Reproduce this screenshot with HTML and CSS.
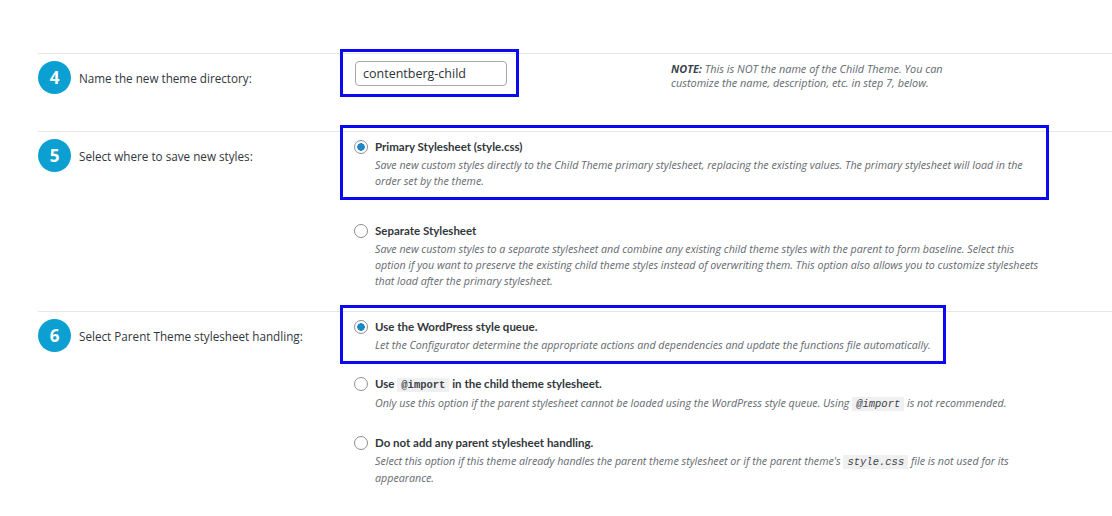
FILE: index.html
```html
<!DOCTYPE html>
<html lang="en">
<head>
    <meta charset="UTF-8">
    <title>Child Theme Configurator</title>
    <link rel="stylesheet" href="styles.css">
</head>
<body>

<div class="steps">

    <div class="step step--name">
        <div class="step-title">
            <span class="step-num">4</span>
            <span class="step-label">Name the new theme directory:</span>
        </div>
        <div class="step-body">
            <div class="field-row">
                <div class="field highlight">
                    <input class="text-input" type="text" value="contentberg-child">
                </div>
                <p class="note"><strong>NOTE:</strong> This is NOT the name of the Child Theme. You can customize the name, description, etc. in step 7, below.</p>
            </div>
        </div>
    </div>

    <div class="step">
        <div class="step-title">
            <span class="step-num">5</span>
            <span class="step-label">Select where to save new styles:</span>
        </div>
        <div class="step-body options options--loose">
            <label class="option highlight option--wide">
                <input class="radio" type="radio" name="save" checked>
                <span class="option-text">
                    <span class="option-label">Primary Stylesheet (style.css)</span>
                    <span class="option-desc">Save new custom styles directly to the Child Theme primary stylesheet, replacing the existing values. The primary stylesheet will load in the order set by the theme.</span>
                </span>
            </label>
            <label class="option">
                <input class="radio" type="radio" name="save">
                <span class="option-text">
                    <span class="option-label">Separate Stylesheet</span>
                    <span class="option-desc">Save new custom styles to a separate stylesheet and combine any existing child theme styles with the parent to form baseline. Select this option if you want to preserve the existing child theme styles instead of overwriting them. This option also allows you to customize stylesheets that load after the primary stylesheet.</span>
                </span>
            </label>
        </div>
    </div>

    <div class="step">
        <div class="step-title">
            <span class="step-num">6</span>
            <span class="step-label">Select Parent Theme stylesheet handling:</span>
        </div>
        <div class="step-body options">
            <label class="option highlight">
                <input class="radio" type="radio" name="parent" checked>
                <span class="option-text">
                    <span class="option-label">Use the WordPress style queue.</span>
                    <span class="option-desc">Let the Configurator determine the appropriate actions and dependencies and update the functions file automatically.</span>
                </span>
            </label>
            <label class="option">
                <input class="radio" type="radio" name="parent">
                <span class="option-text">
                    <span class="option-label">Use <code>@import</code> in the child theme stylesheet.</span>
                    <span class="option-desc">Only use this option if the parent stylesheet cannot be loaded using the WordPress style queue. Using <code>@import</code> is not recommended.</span>
                </span>
            </label>
            <label class="option">
                <input class="radio" type="radio" name="parent">
                <span class="option-text">
                    <span class="option-label">Do not add any parent stylesheet handling.</span>
                    <span class="option-desc">Select this option if this theme already handles the parent theme stylesheet or if the parent theme's <code>style.css</code> file is not used for its appearance.</span>
                </span>
            </label>
        </div>
    </div>

</div>

</body>
</html>
```

FILE: styles.css
```css
body {
    margin: 0;
    background-color: #fff;
    font-family: "Open Sans", "Noto Sans", sans-serif;
    color: #3c434a;
}
.steps {
    padding: 53px 0 0 38px;
}
.step {
    display: flex;
    border-top: 1px solid #e6e6e6;
    padding-bottom: 14px;
}
.step--name {
    padding-bottom: 37px;
}
.step-title {
    width: 302px;
    flex-shrink: 0;
    display: flex;
    align-items: center;
    align-self: flex-start;
    gap: 8px;
    padding-top: 7px;
}
.step-num {
    width: 33px;
    height: 33px;
    border-radius: 50%;
    background-color: #0b9fd2;
    color: #fff;
    font-weight: 700;
    font-size: 17px;
    display: flex;
    align-items: center;
    justify-content: center;
}
.step-label {
    font-size: 11.7px;
    color: #32373c;
}
.step-body {
    flex: 1;
    padding-left: 3px;
}

/* blue annotation frames */
.highlight {
    outline: 3px solid #0a0af2;
}

.field-row {
    display: flex;
    align-items: flex-start;
}
.field {
    margin-top: -2px;
    padding: 9px 9px 8px 12px;
}
.text-input {
    display: block;
    box-sizing: border-box;
    width: 152px;
    height: 25px;
    margin: 0;
    padding: 0 7px;
    border: 1px solid #a7aaad;
    border-radius: 4px;
    font-family: inherit;
    font-size: 12.5px;
    color: #2c3338;
}
.note {
    width: 285px;
    margin: 8px 0 0 155px;
    font-size: 10.9px;
    line-height: 14px;
    font-style: italic;
    color: #646970;
}
.note strong {
    color: #3c434a;
}

.options {
    display: flex;
    flex-direction: column;
    align-items: flex-start;
    gap: 4px;
}
.options--loose {
    gap: 15px;
}
.option {
    display: flex;
    gap: 7px;
    padding: 10px 12px 8px 11px;
}
.options .option:first-child {
    margin-top: -4px;
}
.option--wide {
    box-sizing: border-box;
    width: 703px;
}
.radio {
    appearance: none;
    flex-shrink: 0;
    width: 14px;
    height: 14px;
    margin: 2px 0 0;
    border: 1px solid #8c8f94;
    border-radius: 50%;
    background-color: #fff;
}
.radio:checked {
    background: radial-gradient(circle, #1e88c7 0 3.5px, #fff 4px);
}
.option-text {
    display: flex;
    flex-direction: column;
    max-width: 666px;
}
.option-label {
    font-family: Lato, "Open Sans", sans-serif;
    font-size: 11.5px;
    line-height: 18px;
    font-weight: 700;
    color: #32373c;
}
.option-desc {
    margin-top: 1px;
    font-size: 10.7px;
    line-height: 16px;
    font-style: italic;
    color: #646970;
}
code {
    padding: 1px 4px;
    background-color: #f0f0f1;
    font-family: "Liberation Mono", monospace;
    font-size: 10.5px;
    font-style: normal;
    color: #3c434a;
}
.option-desc code {
    font-style: italic;
    font-weight: 400;
}
```
